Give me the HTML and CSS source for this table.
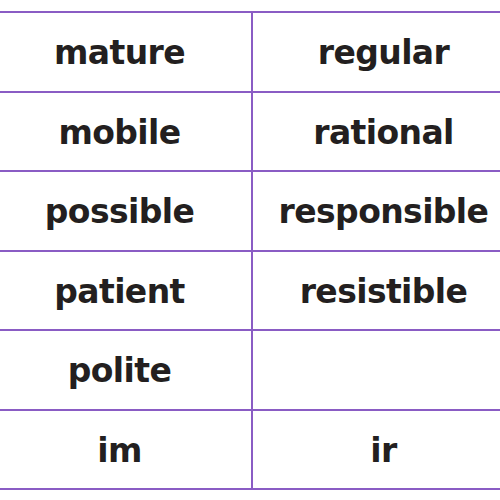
FILE: index.html
```html
<!DOCTYPE html>
<html>
<head>
<meta charset="utf-8">
<link rel="stylesheet" href="styles.css">
</head>
<body>
<div class="sheet">
  <div class="cell">mature</div><div class="cell right">regular</div>
  <div class="cell">mobile</div><div class="cell right">rational</div>
  <div class="cell">possible</div><div class="cell right">responsible</div>
  <div class="cell">patient</div><div class="cell right">resistible</div>
  <div class="cell">polite</div><div class="cell right"></div>
  <div class="cell">im</div><div class="cell right">ir</div>
</div>
</body>
</html>
```
FILE: styles.css
```css
html, body {
  margin: 0;
  padding: 0;
  background: #ffffff;
  overflow: hidden;
}
.sheet {
  margin-top: 11px;
  margin-left: -12px;
  width: 526px;
  display: grid;
  grid-template-columns: 263px 263px;
  grid-auto-rows: 79.5px;
  border-top: 2px solid #8a5cc4;
}
.cell {
  border-bottom: 2px solid #8a5cc4;
  display: flex;
  align-items: center;
  justify-content: center;
  font-family: "DejaVu Sans", sans-serif;
  font-weight: 700;
  font-size: 33px;
  letter-spacing: -0.6px;
  font-variant-ligatures: none;
  color: #231f20;
  padding-top: 2px;
}
.right {
  border-left: 2px solid #8a5cc4;
}
```
